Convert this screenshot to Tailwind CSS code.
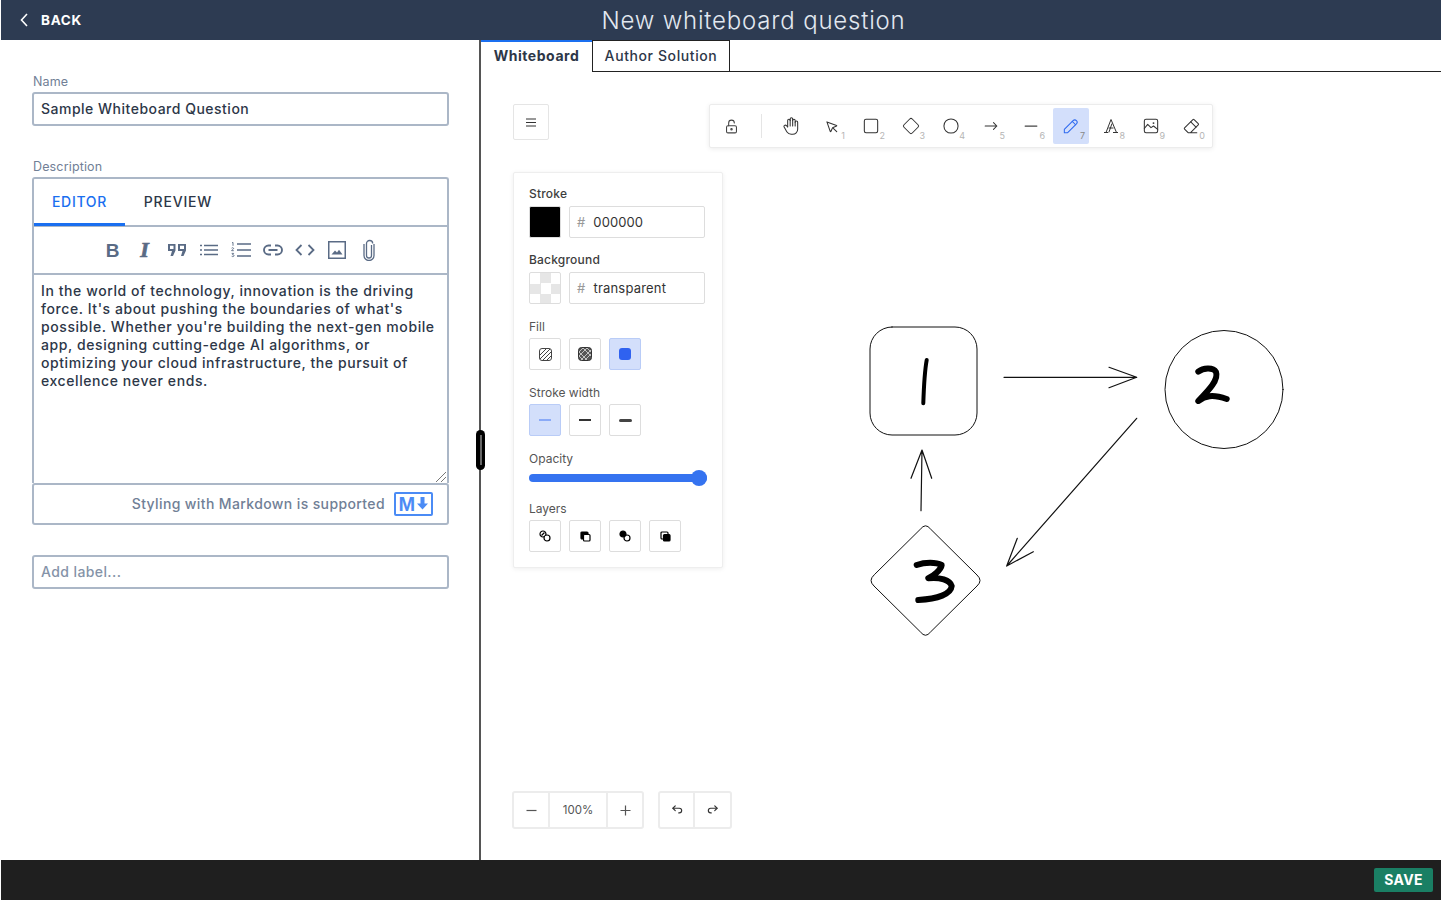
<!DOCTYPE html>
<html lang="en">
<head>
<meta charset="UTF-8">
<title>New whiteboard question</title>
<script src="https://cdn.jsdelivr.net/npm/@tailwindcss/browser@4"></script>
</head>
<body class="w-[1441px] h-[900px] overflow-hidden bg-white font-['Inter',sans-serif] text-[#2d3748]">
<div class="flex flex-col h-full pl-px">

  <!-- Top bar -->
  <header class="h-10 shrink-0 bg-[#2d3b52] flex items-center text-white">
    <a class="w-[85px] shrink-0 flex items-center pl-[19px] gap-[13px] text-[13.5px] font-bold tracking-[0.7px]">
      <svg class="w-2 h-[14px]" viewBox="0 0 8 14" fill="none" stroke="currentColor" stroke-width="1.6"><path d="M7 1 1.5 7 7 13"/></svg>
      <span>BACK</span>
    </a>
    <h1 class="flex-1 text-center text-[24px] font-light text-[#e2e8f0] tracking-[0.8px] pr-[20px] pt-[2px]">New whiteboard question</h1>
  </header>

  <div class="flex-1 flex min-h-0">
    <!-- Left form -->
    <section class="w-[478px] shrink-0 pl-[31px] pr-[30px] pt-[34px]">
      <label class="block pl-px text-[12.5px] leading-4 tracking-[0.15px] text-[#718096] mb-[2px]">Name</label>
      <div class="h-[34px] pb-[2px] border-2 border-[#abb7c7] rounded-[3px] flex items-center px-[7px] text-[14px] font-medium tracking-[0.5px]">Sample Whiteboard Question</div>

      <label class="block pl-px text-[12.5px] leading-4 tracking-[0.15px] text-[#718096] mt-[33px] mb-[2px]">Description</label>
      <div class="border-2 border-b-0 border-[#abb7c7] rounded-t-[3px]">
        <div class="h-[48px] flex border-b-2 border-[#abb7c7]">
          <div class="w-[91px] h-[47px] border-b-[3px] border-[#1a6ff0] flex items-center justify-center text-[14px] font-medium tracking-[0.7px] text-[#1a6ff0]">EDITOR</div>
          <div class="w-[106px] pb-[2px] flex items-center justify-center text-[14px] font-medium tracking-[0.8px] text-[#2d3748]">PREVIEW</div>
        </div>
        <div class="h-[48px] flex items-center justify-center border-b-2 border-[#abb7c7] text-[#5a6b85]">
          <div class="w-8 flex justify-center"><span class="font-['Liberation_Sans',sans-serif] font-bold text-[19px] leading-none">B</span></div>
          <div class="w-8 flex justify-center"><span class="font-['Liberation_Serif',serif] font-bold italic text-[22px] leading-none [-webkit-text-stroke:0.7px_#5a6b85]">I</span></div>
          <div class="w-8 flex justify-center">
            <svg class="w-5 h-[14px]" viewBox="0 0 20 14" fill="currentColor"><path d="M1 1h7.500v6.500L6 13H3.500L5 8H1zM11 1h8v6.500L16.500 13H14l1.500-5H11z"/><path d="M3 2.800h3.500V6H3zM13 2.800h4V6h-4z" fill="#fff"/></svg>
          </div>
          <div class="w-8 flex justify-center">
            <svg class="w-5 h-3" viewBox="0 0 20 12" stroke="currentColor" stroke-width="1.6"><path d="M5 1.500h14M5 6h14M5 10.500h14"/><path d="M1 1.500h2M1 6h2M1 10.500h2"/></svg>
          </div>
          <div class="w-8 flex justify-center">
            <svg class="w-5 h-4" viewBox="0 0 20 16" fill="none" stroke="currentColor"><path stroke-width="1.6" d="M6 2h14M6 8h14M6 14h14"/><path stroke-width="0.9" d="M1 .8 2 .4v3.400M.6 6.200c.5-.7 2-.6 2 .3 0 .8-2 1.300-2 2.200h2.200M.7 11.400h2L1.500 12.800c1-.1 1.500.3 1.500.9 0 1-1.600 1.100-2.300.6"/></svg>
          </div>
          <div class="w-8 flex justify-center">
            <svg class="w-5 h-[12px]" viewBox="0 0 20 12" fill="none" stroke="currentColor" stroke-width="1.9"><path d="M8 1.500H5.500a4.500 4.500 0 0 0 0 9H8M12 1.500h2.500a4.500 4.500 0 0 1 0 9H12M5.500 6h9"/></svg>
          </div>
          <div class="w-8 flex justify-center">
            <svg class="w-5 h-3" viewBox="0 0 20 12" fill="none" stroke="currentColor" stroke-width="1.8"><path d="M6.500 1 1.500 6l5 5M13.500 1l5 5-5 5"/></svg>
          </div>
          <div class="w-8 flex justify-center">
            <svg class="w-[18px] h-[18px]" viewBox="0 0 18 18" fill="currentColor"><path fill-rule="evenodd" d="M0 0h18v18H0zM1.500 1.500v15h15v-15z"/><path d="M3.500 13.500 7 9.500l2 2 2-2.800 3.500 4.800z"/></svg>
          </div>
          <div class="w-8 flex justify-center">
            <svg class="w-3 h-[22px]" viewBox="0 0 12 22" fill="none" stroke="currentColor" stroke-width="1.300"><path d="M8.500 6v10.500a2.500 2.500 0 0 1-5 0V4.500a3 3 0 0 1 3-3h.2a3 3 0 0 1 3 3"/><path d="M11 5v11.500a5 5 0 0 1-10 0V5"/></svg>
          </div>
        </div>
        <div class="relative h-[208px] px-[7px] pt-[7px] text-[14px] leading-[18px] font-medium tracking-[0.58px]">
          In the world of technology, innovation is the driving<br>force. It's about pushing the boundaries of what's<br>possible. Whether you're building the next-gen mobile<br>app, designing cutting-edge AI algorithms, or<br>optimizing your cloud infrastructure, the pursuit of<br>excellence never ends.
          <svg class="absolute right-0 bottom-0 w-3 h-3" viewBox="0 0 12 12" stroke="#777" stroke-width="1"><path d="M1 11 11 1M6 11l5-5"/></svg>
        </div>
      </div>
      <div class="h-[42px] pb-px border-2 border-[#abb7c7] rounded-[3px] flex items-center justify-end gap-[9px] pr-[14px] text-[14px] text-[#718096] font-medium tracking-[0.38px]">
        <span class="pb-[1px]">Styling with Markdown is supported</span>
        <span class="w-[39px] h-[24px] border-2 border-[#4b8bf5] rounded-[2px] flex items-center justify-center text-[#4b8bf5]">
          <span class="font-['Liberation_Sans',sans-serif] font-bold text-[20px] leading-none">M</span>
          <svg class="w-[13px] h-[13px]" viewBox="0 0 13 13" fill="currentColor"><path d="M4.500 0h4v6.500H12L6.500 12.500 1 6.500h3.500z"/></svg>
        </span>
      </div>
      <div class="mt-[30px] h-[34px] pb-[2px] border-2 border-[#abb7c7] rounded-[3px] flex items-center px-[7px] text-[14px] font-medium tracking-[0.4px] text-[#8593a8]">Add label...</div>
    </section>

    <!-- Divider with drag handle -->
    <div class="relative w-[2px] shrink-0 bg-[#555]">
      <div class="absolute left-[-3px] top-[390px] w-[9px] h-[40px] rounded-[5px] bg-black flex justify-center py-[5px]"><div class="w-[2px] bg-[#666]"></div></div>
    </div>

    <!-- Whiteboard -->
    <main class="flex-1 flex flex-col min-w-0">
      <nav class="h-8 shrink-0 flex border-b border-[#222] text-[14px]">
        <div class="w-[111px] h-8 pb-[4px] border-t-2 border-t-[#1a6ff0] bg-white flex items-center justify-center font-bold tracking-[0.55px]">Whiteboard</div>
        <div class="w-[138px] h-[31px] pb-[2px] border-l border-r border-t border-[#222] flex items-center justify-center font-medium tracking-[0.6px]">Author Solution</div>
      </nav>

      <div class="relative flex-1 text-[#333]">
        <!-- Drawing -->
        <svg class="absolute left-0 top-0 w-[960px] h-[788px]" viewBox="481 72 960 788" fill="none" stroke="#111" stroke-width="1" stroke-linecap="round" stroke-linejoin="round">
          <rect x="870" y="327" width="107" height="108" rx="22"/>
          <circle cx="1224" cy="389.500" r="59"/>
          <path d="M920.500 529Q925.500 522.500 930.500 529L977 575Q983 580.500 977 586L930.500 632Q925.500 638.500 920.500 632L874 586Q868 580.500 874 575Z"/>
          <path stroke-width="1.200" d="M1004 377.300H1136.700M1109 367.300 1136.700 377.300 1109 387.700"/>
          <path stroke-width="1.200" d="M921 510.700 922 450M911 478.300 922 450 931.700 478.300"/>
          <path stroke-width="1.200" d="M1136.700 418.300 1006.700 566M1017.300 538.300 1006.700 566 1033.300 551.700"/>
          <path stroke="#000" stroke-width="4" d="M926.700 360C924.500 372 923.800 388 923.300 403.300"/>
          <path stroke="#000" stroke-width="6" d="M1198.300 371.700C1203 368 1213 367 1216 372C1219 380 1208 391 1198.300 401C1205 396 1212 394 1226.700 399"/>
          <path stroke="#000" stroke-width="6" d="M916.700 565C925 562 936 562 941.700 565C941 570 933 576 928.300 578.300C940 577 950 580 951.700 586C951 594 938 599 918.300 600"/>
        </svg>

        <button class="absolute left-[32px] top-[32px] w-9 h-9 bg-white border border-[#e5e5e5] rounded-[2px] flex items-center justify-center">
          <svg class="w-[10px] h-[9px]" viewBox="0 0 10 9" stroke="#333" stroke-width="1"><path d="M0 1h10M0 4.500h10M0 8h10"/></svg>
        </button>

        <!-- Tool island -->
        <div class="absolute left-[228px] top-[32px] h-[44px] bg-white rounded-[2px] border border-[#ececec] shadow-[0_1px_5px_rgba(0,0,0,0.08)] flex items-center px-[3px] gap-1">
          <div class="w-9 h-9 flex items-center justify-center">
            <svg class="w-[17px] h-[17px]" viewBox="0 0 24 24" fill="none" stroke="#444" stroke-width="1.500" stroke-linecap="round" stroke-linejoin="round"><rect x="5" y="11" width="14" height="10" rx="2"/><circle cx="12" cy="16" r="1"/><path d="M8 11V7a4 4 0 0 1 8 0"/></svg>
          </div>
          <div class="w-px h-6 bg-[#e5e5e5] mx-[7.500px]"></div>
          <div class="w-9 h-9 flex items-center justify-center">
            <svg class="w-5 h-5" viewBox="0 0 24 24" fill="none" stroke="#333" stroke-width="1.250" stroke-linecap="round" stroke-linejoin="round"><path d="M8 13v-7.500a1.500 1.500 0 0 1 3 0v6.500"/><path d="M11 5.500v-2a1.500 1.500 0 1 1 3 0v8.500"/><path d="M14 5.500a1.500 1.500 0 0 1 3 0v6.500"/><path d="M17 7.500a1.500 1.500 0 0 1 3 0v8.500a6 6 0 0 1 -6 6h-2h.208a6 6 0 0 1 -5.012 -2.700a69.740 69.740 0 0 1 -.196 -.300c-.312 -.479 -1.407 -2.388 -3.286 -5.728a1.500 1.500 0 0 1 .536 -2.022a1.867 1.867 0 0 1 2.280 .280l1.470 1.470"/></svg>
          </div>
          <div class="relative w-9 h-9 flex items-center justify-center">
            <svg class="w-[18px] h-[18px]" viewBox="0 0 22 22" fill="none" stroke="#333" stroke-width="1.300" stroke-linecap="round" stroke-linejoin="round"><path d="M6 6l4.153 11.793a0.365 .365 0 0 0 .331 .207a0.366 .366 0 0 0 .332 -.207l2.184 -4.793l4.787 -1.994a0.355 .355 0 0 0 .213 -.323a0.355 .355 0 0 0 -.213 -.323l-11.787 -4.360z"/><path d="M13.500 13.500l4.500 4.500"/></svg>
            <span class="absolute right-[4px] bottom-[4px] text-[9px] leading-none text-[#b5b5b5]">1</span>
          </div>
          <div class="relative w-9 h-9 flex items-center justify-center">
            <svg class="w-5 h-5" viewBox="0 0 24 24" fill="none" stroke="#333" stroke-width="1.250"><rect x="4" y="4" width="16" height="16" rx="2"/></svg>
            <span class="absolute right-[4px] bottom-[4px] text-[9px] leading-none text-[#b5b5b5]">2</span>
          </div>
          <div class="relative w-9 h-9 flex items-center justify-center">
            <svg class="w-5 h-5" viewBox="0 0 24 24" fill="none" stroke="#333" stroke-width="1.250"><path d="M10.500 20.400l-6.900 -6.900c-.781 -.781 -.781 -2.219 0 -3l6.900 -6.900c.781 -.781 2.219 -.781 3 0l6.900 6.900c.781 .781 .781 2.219 0 3l-6.900 6.900c-.781 .781 -2.219 .781 -3 0z"/></svg>
            <span class="absolute right-[4px] bottom-[4px] text-[9px] leading-none text-[#b5b5b5]">3</span>
          </div>
          <div class="relative w-9 h-9 flex items-center justify-center">
            <svg class="w-5 h-5" viewBox="0 0 24 24" fill="none" stroke="#333" stroke-width="1.250"><circle cx="12" cy="12" r="8.500"/></svg>
            <span class="absolute right-[4px] bottom-[4px] text-[9px] leading-none text-[#b5b5b5]">4</span>
          </div>
          <div class="relative w-9 h-9 flex items-center justify-center">
            <svg class="w-5 h-5" viewBox="0 0 24 24" fill="none" stroke="#333" stroke-width="1.250" stroke-linecap="round" stroke-linejoin="round"><path d="M5 12h14M15 16l4-4M15 8l4 4"/></svg>
            <span class="absolute right-[4px] bottom-[4px] text-[9px] leading-none text-[#b5b5b5]">5</span>
          </div>
          <div class="relative w-9 h-9 flex items-center justify-center">
            <svg class="w-5 h-5" viewBox="0 0 24 24" fill="none" stroke="#444" stroke-width="1.500" stroke-linecap="round"><path d="M5 12h14"/></svg>
            <span class="absolute right-[4px] bottom-[4px] text-[9px] leading-none text-[#b5b5b5]">6</span>
          </div>
          <div class="relative w-9 h-9 bg-[#d3dffb] rounded-[2px] flex items-center justify-center">
            <svg class="w-5 h-5" viewBox="0 0 24 24" fill="none" stroke="#2f6bf0" stroke-width="1.250" stroke-linecap="round" stroke-linejoin="round"><path d="M4 20h4l10.500 -10.500a1.500 1.500 0 0 0 -4 -4l-10.500 10.500v4"/><path d="M13.500 6.500l4 4"/></svg>
            <span class="absolute right-[4px] bottom-[4px] text-[9px] leading-none text-[#888]">7</span>
          </div>
          <div class="relative w-9 h-9 flex items-center justify-center">
            <svg class="w-4 h-4" viewBox="0 0 16 16" fill="none" stroke="#333" stroke-width="1"><path d="M1 14.500h4M10 14.500h5M3 14.500 8 1.500l5.500 13M5.500 10h5M5.800 14.500 9 5.500"/></svg>
            <span class="absolute right-[4px] bottom-[4px] text-[9px] leading-none text-[#b5b5b5]">8</span>
          </div>
          <div class="relative w-9 h-9 flex items-center justify-center">
            <svg class="w-5 h-5" viewBox="0 0 24 24" fill="none" stroke="#333" stroke-width="1.250" stroke-linecap="round" stroke-linejoin="round"><rect x="4" y="4" width="16" height="16" rx="2"/><path d="M4 15l4-5 4 4 3-2 5 4"/><circle cx="15" cy="8.500" r=".5"/></svg>
            <span class="absolute right-[4px] bottom-[4px] text-[9px] leading-none text-[#b5b5b5]">9</span>
          </div>
          <div class="relative w-9 h-9 flex items-center justify-center">
            <svg class="w-5 h-5" viewBox="0 0 24 24" fill="none" stroke="#333" stroke-width="1.250" stroke-linecap="round" stroke-linejoin="round"><path d="M19 20h-10.500l-4.210 -4.300a1 1 0 0 1 0 -1.410l10 -10a1 1 0 0 1 1.410 0l5 5a1 1 0 0 1 0 1.410l-9.200 9.300"/><path d="M18 13.300l-6.300 -6.300"/></svg>
            <span class="absolute right-[4px] bottom-[4px] text-[9px] leading-none text-[#b5b5b5]">0</span>
          </div>
        </div>

        <!-- Properties panel -->
        <aside class="absolute left-[32px] top-[100px] w-[210px] h-[396px] bg-white border border-[#eee] rounded-[2px] shadow-[0_1px_5px_rgba(0,0,0,0.07)] pl-[15px] pt-[14px] text-[12px]">
          <div class="leading-[14px] font-medium mb-[5px] text-[#3d3d3d] tracking-[0.2px]">Stroke</div>
          <div class="flex gap-2">
            <div class="w-8 h-8 bg-black border border-[#ddd] rounded-[2px]"></div>
            <div class="w-[136px] h-8 pt-[2px] border border-[#ddd] rounded-[2px] flex items-center px-[7px] gap-[8px] text-[13px] tracking-[0.1px] text-[#333]"><span class="text-[#999] text-[13px]">#</span><span>000000</span></div>
          </div>
          <div class="leading-[14px] font-medium mt-[15px] mb-[5px] text-[#3d3d3d] tracking-[0.2px]">Background</div>
          <div class="flex gap-2">
            <div class="w-8 h-8 border border-[#ddd] rounded-[2px] bg-[conic-gradient(#e6e6e6_25%,#fff_0_50%,#e6e6e6_0_75%,#fff_0)] bg-[length:21px_21px]"></div>
            <div class="w-[136px] h-8 pt-[2px] border border-[#ddd] rounded-[2px] flex items-center px-[7px] gap-[8px] text-[13px] tracking-[0.2px] text-[#333]"><span class="text-[#999] text-[13px]">#</span><span>transparent</span></div>
          </div>
          <div class="leading-[14px] text-[#555] mt-[16px] mb-[4px]">Fill</div>
          <div class="flex gap-2">
            <div class="w-8 h-8 border border-[#ddd] rounded-[2px] flex items-center justify-center">
              <svg class="w-[13px] h-[13px]" viewBox="0 0 13 13" fill="none" stroke="#444"><rect x=".5" y=".5" width="12" height="12" rx="2.500"/><path d="M1 7 7 1M1 11 11 1M4 12 12 4M8 12l4-4" stroke-width="1"/></svg>
            </div>
            <div class="w-8 h-8 border border-[#ddd] rounded-[2px] flex items-center justify-center">
              <svg class="w-[14px] h-[14px]" viewBox="0 0 14 14" fill="none" stroke="#333" stroke-width="1"><rect x=".5" y=".5" width="13" height="13" rx="3" fill="#555"/><path stroke="#ddd" stroke-width=".8" d="M1 5 5 1M1 9 9 1M3 13 13 3M7 13l6-6M1 9l4 4M1 5l8 8M5 1l8 8M9 1l4 4"/></svg>
            </div>
            <div class="w-8 h-8 border border-[#b9ccf7] bg-[#d3dffb] rounded-[2px] flex items-center justify-center">
              <div class="w-3 h-3 bg-[#2f62f0] rounded-[3px]"></div>
            </div>
          </div>
          <div class="leading-[14px] text-[#555] mt-[16px] mb-[4px]">Stroke width</div>
          <div class="flex gap-2">
            <div class="w-8 h-8 border border-[#b9ccf7] bg-[#d3dffb] rounded-[2px] flex items-center justify-center"><div class="w-3 h-[2px] bg-[#8aaaf7]"></div></div>
            <div class="w-8 h-8 border border-[#ddd] rounded-[2px] flex items-center justify-center"><div class="w-3 h-[2px] bg-[#333]"></div></div>
            <div class="w-8 h-8 border border-[#ddd] rounded-[2px] flex items-center justify-center"><div class="w-[13px] h-[3px] rounded-full bg-[#444]"></div></div>
          </div>
          <div class="leading-[14px] text-[#555] mt-[16px] mb-[8px]">Opacity</div>
          <div class="relative w-[178px] h-2 rounded-full bg-[#3573f0]">
            <div class="absolute right-0 -top-1 w-4 h-4 rounded-full bg-[#3573f0]"></div>
          </div>
          <div class="leading-[14px] text-[#555] mt-[20px] mb-[4px]">Layers</div>
          <div class="flex gap-2">
            <div class="w-8 h-8 border border-[#ddd] rounded-[2px] flex items-center justify-center">
              <svg class="w-3 h-3" viewBox="0 0 12 12" stroke="#000" stroke-width="1.200" fill="#fff"><circle cx="4" cy="4" r="3"/><circle cx="8" cy="8" r="3"/><path d="M2.500 5.500 5.500 2.500" fill="none"/></svg>
            </div>
            <div class="w-8 h-8 border border-[#ddd] rounded-[2px] flex items-center justify-center">
              <svg class="w-[11px] h-[11px]" viewBox="0 0 11 11" stroke="#000" stroke-width="1.200"><rect x="1" y="1" width="7" height="7" rx="1" fill="#000"/><rect x="3.500" y="3.500" width="6.500" height="6.500" rx="1" fill="#fff"/></svg>
            </div>
            <div class="w-8 h-8 border border-[#ddd] rounded-[2px] flex items-center justify-center">
              <svg class="w-3 h-3" viewBox="0 0 12 12" stroke="#000" stroke-width="1.200" fill="#fff"><circle cx="8" cy="8" r="3"/><circle cx="4" cy="4" r="3" fill="#000"/></svg>
            </div>
            <div class="w-8 h-8 border border-[#ddd] rounded-[2px] flex items-center justify-center">
              <svg class="w-[11px] h-[11px]" viewBox="0 0 11 11" stroke="#000" stroke-width="1.200"><rect x="1" y="1" width="7" height="7" rx="1" fill="#fff"/><rect x="3.500" y="3.500" width="6.500" height="6.500" rx="1" fill="#000"/></svg>
            </div>
          </div>
        </aside>

        <!-- Zoom and history -->
        <div class="absolute left-[31px] top-[719px] flex gap-[14px]">
          <div class="h-[38px] flex border-2 border-[#ececec] rounded-[3px] text-[#555]">
            <div class="w-[36px] flex items-center justify-center border-r-2 border-[#ececec]"><svg class="w-[11px] h-[11px]" viewBox="0 0 11 11" stroke="#555" stroke-width="1.200"><path d="M.5 5.500h10"/></svg></div>
            <div class="w-[56px] pt-[2px] flex items-center justify-center text-[11.5px]">100%</div>
            <div class="w-[36px] flex items-center justify-center border-l-2 border-[#ececec]"><svg class="w-[11px] h-[11px]" viewBox="0 0 11 11" stroke="#555" stroke-width="1.200"><path d="M.5 5.500h10M5.500.5v10"/></svg></div>
          </div>
          <div class="h-[38px] flex border-2 border-[#ececec] rounded-[3px]">
            <div class="w-[35px] flex items-center justify-center border-r-2 border-[#ececec]"><svg class="w-[14px] h-[14px]" viewBox="0 0 24 24" fill="none" stroke="#333" stroke-width="2" stroke-linecap="round" stroke-linejoin="round"><path d="M9 13 5 9l4-4"/><path d="M5 9h11a4 4 0 0 1 0 8h-1"/></svg></div>
            <div class="w-[35px] flex items-center justify-center"><svg class="w-[14px] h-[14px]" viewBox="0 0 24 24" fill="none" stroke="#333" stroke-width="2" stroke-linecap="round" stroke-linejoin="round"><path d="m15 13 4-4-4-4"/><path d="M19 9H8a4 4 0 0 0 0 8h1"/></svg></div>
          </div>
        </div>
      </div>
    </main>
  </div>

  <!-- Bottom bar -->
  <footer class="h-10 shrink-0 bg-[#1f1f1f] flex items-center justify-end pr-2">
    <button class="w-[59px] h-6 pb-[2px] rounded-[2px] bg-[#1a7f64] text-white text-[14px] font-bold tracking-[0.3px]">SAVE</button>
  </footer>
</div>
</body>
</html>
